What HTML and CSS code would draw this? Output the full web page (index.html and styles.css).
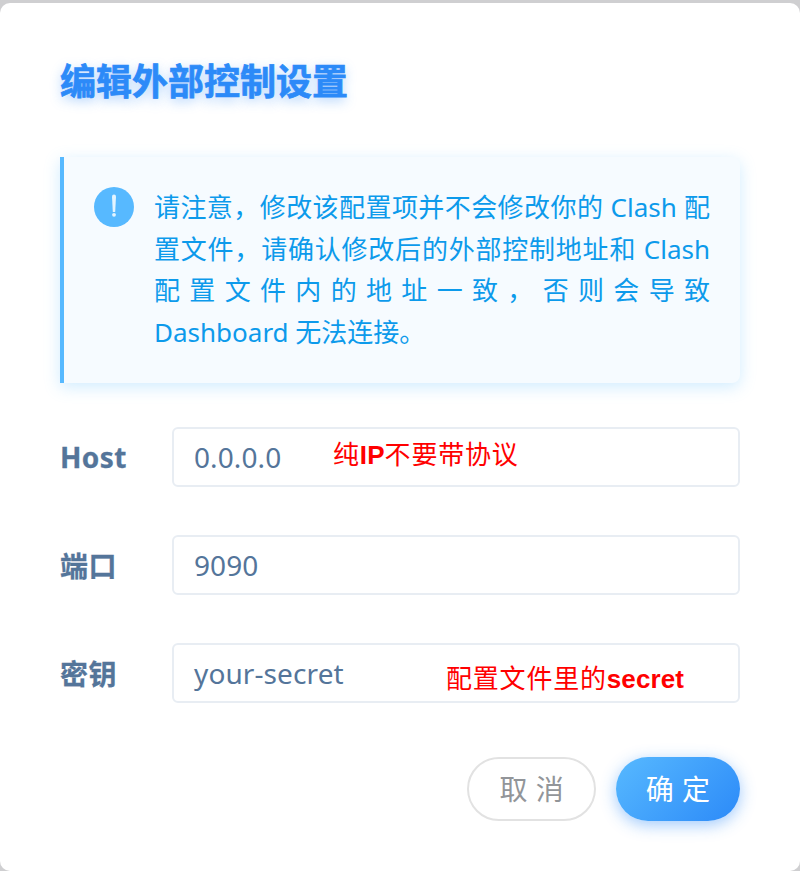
FILE: index.html
```html
<!DOCTYPE html>
<html lang="zh-CN">
<head>
<meta charset="utf-8">
<title>编辑外部控制设置</title>
<link rel="stylesheet" href="styles.css">
</head>
<body>
<div class="dialog">
  <h1 class="title">编辑外部控制设置</h1>
  <div class="alert">
    <span class="alert-icon"><svg viewBox="0 0 40 40" width="40" height="40"><path d="M18 9.6a2 2 0 0 1 4 0L21.2 25h-2.4z" fill="#e3f4ff"/><circle cx="20" cy="27.8" r="1.9" fill="#e3f4ff"/></svg></span>
    <p class="alert-text">请注意，修改该配置项并不会修改你的 Clash 配置文件，请确认修改后的外部控制地址和 Clash 配置文件内的地址一致，否则会导致 Dashboard 无法连接。</p>
  </div>
  <form class="form">
    <div class="row">
      <label class="label">Host</label>
      <div class="input">0.0.0.0<span class="note note-host">纯<b>IP</b>不要带协议</span></div>
    </div>
    <div class="row">
      <label class="label">端口</label>
      <div class="input">9090</div>
    </div>
    <div class="row">
      <label class="label">密钥</label>
      <div class="input">your-secret<span class="note note-secret">配置文件里的<b>secret</b></span></div>
    </div>
  </form>
  <div class="actions">
    <button class="btn btn-cancel" type="button">取 消</button>
    <button class="btn btn-ok" type="button">确 定</button>
  </div>
</div>
</body>
</html>
```
FILE: styles.css
```css
* { box-sizing: border-box; }
html, body { margin: 0; height: 100%; }
body {
  background: #cfcfd1;
  padding-top: 3px;
  overflow: hidden;
  font-family: "Noto Sans", "Noto Sans CJK SC", sans-serif;
}
.dialog {
  height: 868px;
  background: #fff;
  border-radius: 10px;
  padding: 54px 60px 0;
}
.title {
  margin: 0;
  font-size: 36px;
  line-height: 50px;
  font-weight: 700;
  color: #2c8af8;
  -webkit-text-stroke: 0.7px #2c8af8;
  text-shadow: 0 4px 12px rgba(44, 138, 248, 0.4);
}
.alert {
  display: flex;
  margin-top: 50px;
  height: 226px;
  padding: 30px;
  background: #f6fbff;
  border-left: 4px solid #57b9ff;
  border-radius: 0 8px 8px 0;
  box-shadow: 0 4px 16px rgba(87, 185, 255, 0.28);
}
.alert-icon {
  flex: none;
  width: 40px;
  height: 40px;
  border-radius: 50%;
  background: #57b9ff;
}
.alert-icon svg { display: block; }
.alert-text {
  margin: 0 0 0 20px;
  font-size: 26px;
  line-height: 41.6px;
  color: #0c9aeb;
  text-align: justify;
}
.form { margin-top: 44px; display: flex; flex-direction: column; gap: 48px; }
.row { display: flex; align-items: center; height: 60px; }
.label {
  width: 112px;
  flex: none;
  font-size: 28px;
  font-weight: 700;
  letter-spacing: 0.4px;
  color: #54759a;
  -webkit-text-stroke: 0.3px #54759a;
}
.input {
  position: relative;
  flex: 1;
  height: 60px;
  padding: 0 20px;
  border: 2px solid #e8edf3;
  border-radius: 6px;
  font-size: 28px;
  line-height: 56px;
  letter-spacing: 0.1px;
  color: #54759a;
}
.note {
  position: absolute;
  font-family: "Liberation Sans", "Noto Sans CJK SC", sans-serif;
  font-size: 26px;
  line-height: 30px;
  letter-spacing: 0.8px;
  color: #f00;
  white-space: nowrap;
}
.note b { letter-spacing: 0.1px; }
.note-host { left: 159px; top: 11px; }
.note-secret { left: 272px; top: 19px; }
.actions { display: flex; justify-content: flex-end; gap: 20px; margin-top: 54px; }
.btn {
  height: 64px;
  padding: 0 30px;
  border-radius: 32px;
  font: 28px/1 "Noto Sans", "Noto Sans CJK SC", sans-serif;
  word-spacing: 1px;
  cursor: pointer;
}
.btn-cancel { background: #fff; border: 2px solid #e2e2e2; color: #929599; }
.btn-ok {
  border: 0;
  color: #fff;
  background: linear-gradient(135deg, #57b9ff, #2c8af8);
  box-shadow: 0 4px 16px rgba(44, 138, 248, 0.45);
}
```
